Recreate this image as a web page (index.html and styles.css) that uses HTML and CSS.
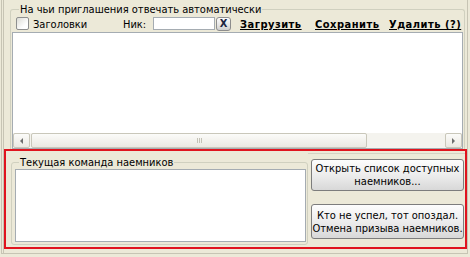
FILE: index.html
```html
<!DOCTYPE html>
<html lang="ru">
<head>
    <meta charset="UTF-8">
    <title>Наемники</title>
    <link rel="stylesheet" href="styles.css">
</head>
<body>
    <div class="frame">
        <fieldset class="group auto">
            <legend>На чьи приглашения отвечать автоматически</legend>
            <div class="toolbar">
                <input type="checkbox" class="check">
                <span class="cap">Заголовки</span>
                <span class="nick">Ник:</span>
                <input type="text" class="field">
                <span class="clear">X</span>
                <span class="links">
                    <a class="link load">Загрузить</a>
                    <a class="link save">Сохранить</a>
                    <a class="link del">Удалить (?)</a>
                </span>
            </div>
            <div class="listbox list-main">
                <div class="list-body"></div>
                <div class="hscroll">
                    <span class="sb-btn sb-left"></span>
                    <span class="sb-thumb"><span class="grip"></span></span>
                    <span class="sb-track"></span>
                    <span class="sb-btn sb-right"></span>
                </div>
            </div>
        </fieldset>

        <div class="highlight">
            <fieldset class="group team">
                <legend>Текущая команда наемников</legend>
                <div class="listbox list-team"></div>
            </fieldset>
            <div class="side">
                <button class="btn btn-open">Открыть список доступных<br>наемников...</button>
                <button class="btn btn-cancel">Кто не успел, тот опоздал.<br>Отмена призыва наемников.</button>
            </div>
        </div>
    </div>
</body>
</html>
```

FILE: styles.css
```css
* {
    box-sizing: border-box;
}
body {
    margin: 0;
    background: #ece9d8;
    font: 11px/13px "DejaVu Sans Condensed", "Liberation Sans", sans-serif;
    color: #000;
}
.frame {
    width: 467px;
    height: 254px;
    margin-left: 1px;
    padding-top: 3px;
    border-left: 3px double #c7c4b4;
    border-right: 1px solid #c7c4b4;
    border-bottom: 1px solid #c7c4b4;
}

/* group boxes */
.group {
    margin: 0;
    padding: 0 1px;
    min-width: 0;
    border: 1px solid #d0d0bf;
    border-radius: 3px;
}
.group legend {
    padding: 0 1px;
    margin-left: 7px;
}
.auto {
    margin: 0 2px 0 6px;
    border-bottom: 0;
    border-radius: 3px 3px 0 0;
}

/* toolbar row */
.toolbar {
    display: flex;
    height: 16px;
}
.check {
    appearance: none;
    margin: 1px 0 0 4px;
    width: 13px;
    height: 13px;
    border: 1px solid #8e8f8f;
    border-radius: 2px;
    background: linear-gradient(135deg, #dcdcd6, #fff 70%);
}
.cap {
    margin: 2px 0 0 4px;
    width: 90px;
}
.nick {
    margin-top: 2px;
    width: 30px;
}
.field {
    margin: 1px 0 0;
    padding: 0;
    width: 62px;
    height: 13px;
    border: 1px solid #a5acb2;
    background: #fff;
}
.clear {
    margin: 1px 0 0 1px;
    width: 15px;
    height: 14px;
    border: 1px solid #8d8d8d;
    border-radius: 3px;
    background: linear-gradient(#fdfdfd, #e4e4e4 60%, #d0d0d0);
    font-weight: bold;
    line-height: 12px;
    text-align: center;
    color: #1b2440;
}
.links {
    display: flex;
    margin: 2px 0 0 9px;
}
.link {
    font-weight: bold;
    letter-spacing: 0.5px;
    text-decoration: underline;
    color: #000;
}
.load {
    width: 75px;
}
.save {
    width: 74px;
}

/* list boxes */
.listbox {
    background: #fff;
    border: 1px solid #a5acb2;
}
.list-main {
    height: 117px;
    display: flex;
    flex-direction: column;
}
.list-body {
    flex: 1;
}
.hscroll {
    display: flex;
    height: 15px;
    background: #f4f3ee;
}
.sb-btn,
.sb-thumb {
    display: flex;
    align-items: center;
    justify-content: center;
    border: 1px solid #c9c7ba;
    border-radius: 2px;
    background: linear-gradient(#fbfbf9, #ebe9e2);
}
.sb-btn {
    width: 17px;
}
.sb-left::before,
.sb-right::before {
    content: "";
    border-top: 3px solid transparent;
    border-bottom: 3px solid transparent;
}
.sb-left::before {
    border-right: 3px solid #6d6d6d;
}
.sb-right::before {
    border-left: 3px solid #6d6d6d;
}
.sb-thumb {
    width: 336px;
    margin-left: 1px;
}
.grip {
    width: 5px;
    height: 5px;
    background: repeating-linear-gradient(90deg, #c4c2b6 0 1px, transparent 1px 2px);
}
.sb-track {
    flex: 1;
}

/* highlighted block */
.highlight {
    display: flex;
    height: 100px;
    border: 2px solid #e0141e;
}
.team {
    margin: 5px 0 2px 5px;
    width: 297px;
    padding: 0 1px 2px 3px;
}
.team legend {
    margin-left: 4px;
}
.list-team {
    height: 73px;
}
.side {
    display: flex;
    flex-direction: column;
    justify-content: space-between;
    margin-top: 2px;
    padding: 5px 0 8px 3px;
    width: 157px;
    border-top: 1px solid #d5d2c4;
}
.btn {
    width: 153px;
    padding: 0;
    border: 1px solid #7d7d7d;
    border-radius: 3px;
    background: linear-gradient(#fdfdfd, #ebebeb 55%, #d8d8d8);
    font: inherit;
    color: #000;
    text-align: center;
}
.btn-open {
    height: 32px;
}
.btn-cancel {
    height: 35px;
}
```
